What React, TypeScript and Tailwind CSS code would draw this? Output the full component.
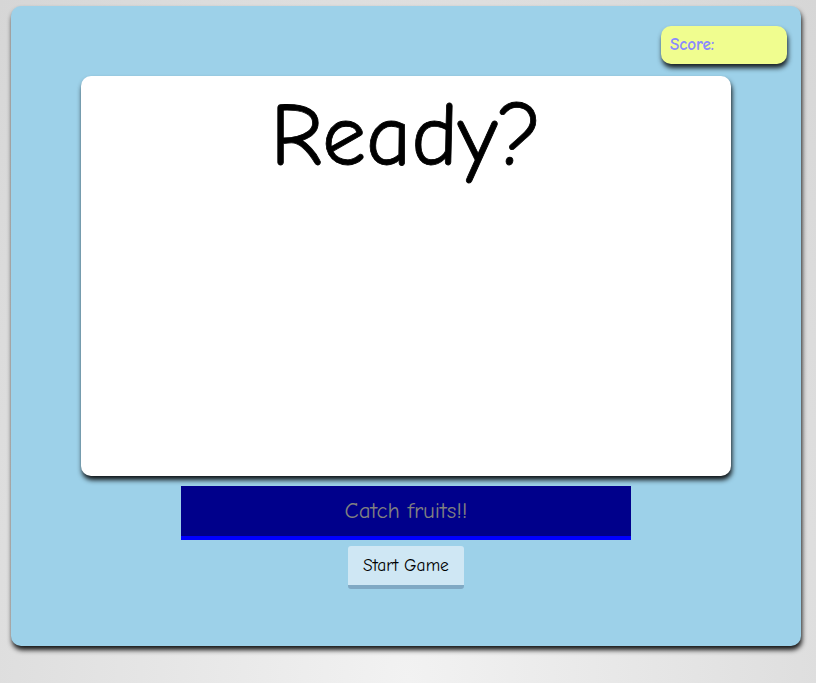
import React from "react";

const font = { fontFamily: '"Comic Sans MS", "Comic Neue", "DejaVu Sans", sans-serif' };

export default function App() {
  return (
    <div
      className="w-[816px] h-[683px] pt-[6px] pl-[11px] bg-[radial-gradient(ellipse_at_50%_100%,#f2f2f2_0%,#d6d6d6_100%)]"
      style={font}
    >
      <div className="w-[790px] h-[640px] rounded-[10px] bg-[#9dd1e9] shadow-[1px_4px_5px_rgba(0,0,0,0.9)] flex flex-col items-center pt-[20px]">
        <div className="self-end mr-[14px] w-[126px] h-[38px] rounded-[10px] bg-[#f0fd8f] shadow-[1px_4px_5px_rgba(0,0,0,0.85)] flex items-center pl-[9px]">
          <span className="text-[17px] font-bold text-[#8a8aff]">Score:</span>
        </div>
        <div className="mt-[12px] w-[650px] h-[400px] rounded-[10px] bg-white shadow-[1px_4px_5px_rgba(0,0,0,0.9)] flex justify-center">
          <div className="mt-[6px] text-[88px] leading-[1.25] text-black [-webkit-text-stroke:0.8px_black]">Ready?</div>
        </div>
        <div className="mt-[10px] w-[450px] h-[54px] bg-[#00008b] border-b-[4px] border-[#0000ff] flex items-center justify-center">
          <span className="text-[23px] text-[#808080]">Catch fruits!!</span>
        </div>
        <button className="mt-[6px] w-[116px] h-[43px] rounded-[3px] bg-[#cfe7f4] border-b-[4px] border-[#80a9c4] text-[17.5px] text-black flex items-center justify-center" style={font}>
          Start Game
        </button>
      </div>
    </div>
  );
}
